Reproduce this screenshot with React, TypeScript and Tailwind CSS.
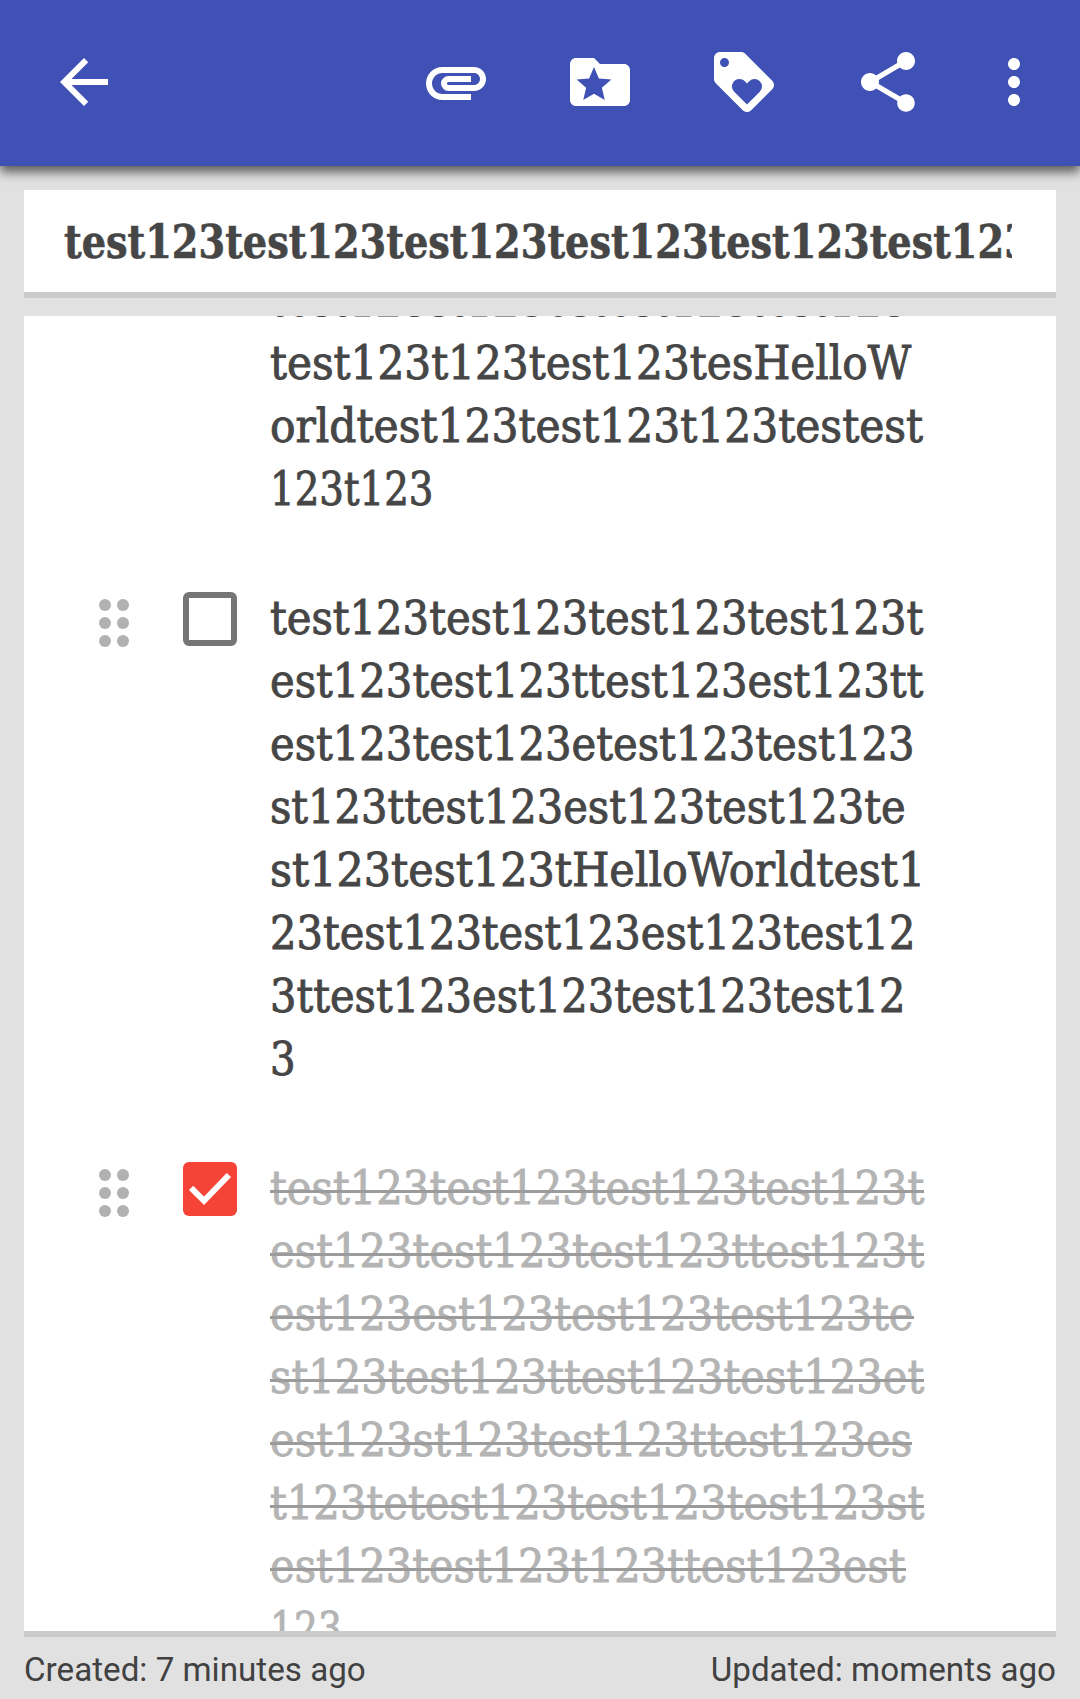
import React from "react";
import { MdArrowBack, MdAttachment, MdLoyalty, MdMoreVert, MdShare } from "react-icons/md";

const slab = "font-['DejaVu_Serif_Condensed','DejaVu_Serif',serif] [font-stretch:condensed]";

type Line = { text: string; width: number };
type Item = { checked: boolean; lines: Line[] };

const items: Item[] = [
  {
    checked: false,
    lines: [
      { text: "test123st123estest123test123", width: 638 },
      { text: "test123t123test123tesHelloW", width: 641 },
      { text: "orldtest123test123t123testest", width: 653 },
      { text: "123t123", width: 163 },
    ],
  },
  {
    checked: false,
    lines: [
      { text: "test123test123test123test123t", width: 653 },
      { text: "est123test123ttest123est123tt", width: 653 },
      { text: "est123test123etest123test123", width: 645 },
      { text: "st123ttest123est123test123te", width: 636 },
      { text: "st123test123tHelloWorldtest1", width: 655 },
      { text: "23test123test123est123test12", width: 645 },
      { text: "3ttest123est123test123test12", width: 636 },
      { text: "3", width: 26 },
    ],
  },
  {
    checked: true,
    lines: [
      { text: "test123test123test123test123t", width: 654 },
      { text: "est123test123test123ttest123t", width: 654 },
      { text: "est123est123test123test123te", width: 644 },
      { text: "st123test123ttest123test123et", width: 654 },
      { text: "est123st123test123ttest123es", width: 642 },
      { text: "t123tetest123test123test123st", width: 654 },
      { text: "est123test123t123ttest123est", width: 636 },
      { text: "123", width: 72 },
    ],
  },
];

// Scales a run of text horizontally so that it fills exactly the given width.
function FitText({ text, width }: Line) {
  const ref = React.useRef<HTMLSpanElement>(null);
  const [scale, setScale] = React.useState(1);
  React.useLayoutEffect(() => {
    if (ref.current) setScale(width / ref.current.offsetWidth);
  }, [width]);
  return (
    <span ref={ref} className="inline-block origin-left whitespace-nowrap" style={{ transform: `scaleX(${scale})` }}>
      {text}
    </span>
  );
}

function FolderStar() {
  return (
    <svg viewBox="0 0 24 24" className="size-[72px]" fill="currentColor">
      <path d="M20 6h-8l-2-2H4c-1.1 0-1.99.9-1.99 2L2 18c0 1.1.9 2 2 2h16c1.1 0 2-.9 2-2V8c0-1.1-.9-2-2-2zm-6.42 12L10 15.9 6.42 18l.95-4.07-3.16-2.74 4.16-.36L10 7l1.63 3.84 4.16.36-3.16 2.74.95 4.06z" />
    </svg>
  );
}

function Checkbox({ checked }: { checked: boolean }) {
  if (!checked) return <div className="size-[54px] shrink-0 rounded-[6px] border-[6px] border-[#757575]" />;
  return (
    <div className="size-[54px] shrink-0 rounded-[6px] bg-[#f54337]">
      <svg viewBox="0 0 54 54" className="size-full" fill="none" stroke="#fff" strokeWidth="6">
        <path d="M8.1 25.9 21 38.8 45.9 13" />
      </svg>
    </div>
  );
}

function DragHandle() {
  return (
    <div className="mt-[7px] grid shrink-0 grid-cols-2 gap-[6px]">
      {[0, 1, 2, 3, 4, 5].map((n) => (
        <div key={n} className="size-3 rounded-full bg-[#b1b1b1]" />
      ))}
    </div>
  );
}

function Row({ item, first }: { item: Item; first: boolean }) {
  return (
    <div className="flex items-start pl-[75px]">
      <div className={first ? "invisible flex w-[171px] items-start" : "flex w-[171px] items-start pt-[4px]"}>
        <DragHandle />
        <div className="ml-[54px]">
          <Checkbox checked={item.checked} />
        </div>
      </div>
      <div className={item.checked ? "text-[#b4b4b4]" : "text-[#464646]"}>
        {item.lines.map((line, i) => (
          <div key={i} className="relative h-[63px] text-[46.5px] leading-[61px] [-webkit-text-stroke:0.9px_currentColor]">
            <FitText {...line} />
            {item.checked && (
              <div className="absolute left-0 top-[32px] h-[3px] bg-[#9b9b9b]" style={{ width: line.width }} />
            )}
          </div>
        ))}
      </div>
    </div>
  );
}

export default function App() {
  return (
    <div className={`flex h-[1699px] w-[1080px] flex-col overflow-hidden bg-[#e1e1e1] ${slab}`}>
      <header className="relative z-10 flex h-[166px] shrink-0 items-start bg-[#3f51b5] pl-12 pr-[30px] pt-[46px] text-white shadow-[0_6px_10px_0_rgba(0,0,0,0.6)]">
        <MdArrowBack size={72} />
        <div className="ml-auto flex">
          <div className="flex gap-[72px]">
            <MdAttachment size={72} />
            <FolderStar />
            <MdLoyalty size={72} />
            <MdShare size={72} />
          </div>
          <MdMoreVert size={72} className="ml-[54px]" />
        </div>
      </header>
      <div className="mx-6 mt-6 h-[108px] shrink-0 border-b-[6px] border-[#cbcbcb] bg-white pl-10 pr-11">
        <div className="h-[102px] overflow-hidden text-[46.5px] font-bold leading-[103px] text-[#464646] [-webkit-text-stroke:0.6px_currentColor]">
          <FitText text="test123test123test123test123test123test123" width={967} />
        </div>
      </div>
      <main className="mx-6 mt-[18px] h-[1321px] shrink-0 overflow-hidden border-b-[6px] border-[#cbcbcb] bg-white">
        <div className="-mt-[46px] flex flex-col gap-[66px]">
          {items.map((item, i) => (
            <Row key={i} item={item} first={i === 0} />
          ))}
        </div>
      </main>
      <footer className="mx-6 mt-[14px] flex justify-between font-[Roboto,sans-serif] text-[33.2px] leading-[38px] text-[#414141] [font-stretch:normal]">
        <span>Created: 7 minutes ago</span>
        <span>Updated: moments ago</span>
      </footer>
    </div>
  );
}
